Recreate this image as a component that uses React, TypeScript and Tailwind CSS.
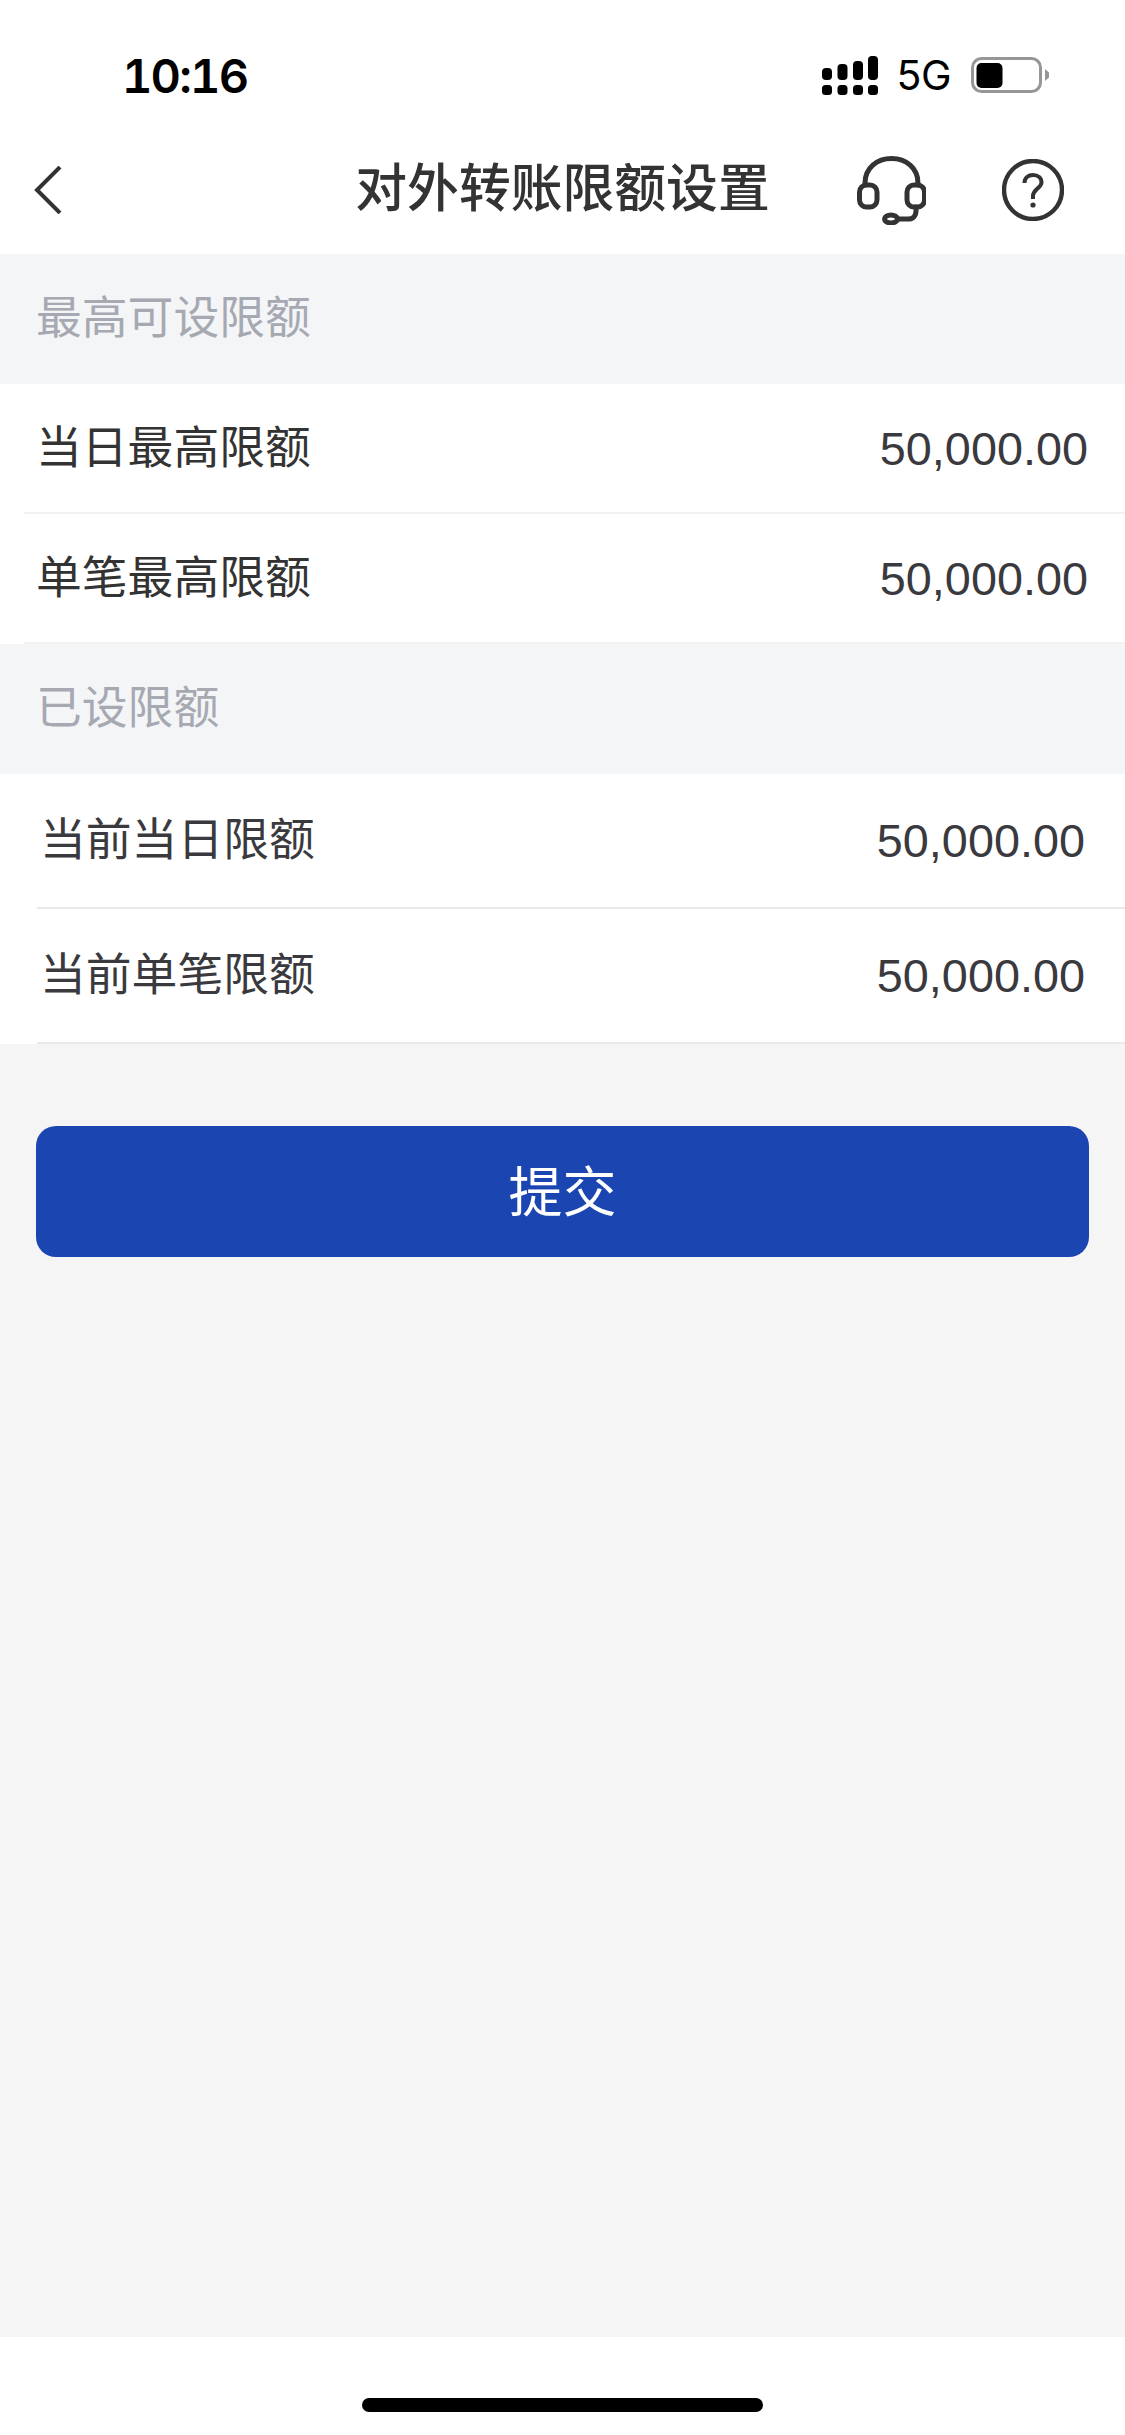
const FONT = "font-['Liberation_Sans','Noto_Sans_CJK_SC',sans-serif]"

function SignalIcon() {
    const cols = [
        { x: 0, top: 12 },
        { x: 15.5, top: 8 },
        { x: 31, top: 5 },
        { x: 46, top: 0 },
    ]
    return (
        <svg width="56" height="39" viewBox="0 0 56 39" fill="#000">
            {cols.map((c) => (
                <g key={c.x}>
                    <rect x={c.x} y={c.top} width="10" height={24 - c.top} rx="4" />
                    <rect x={c.x} y="29" width="10" height="10" rx="3.5" />
                </g>
            ))}
        </svg>
    )
}

function BatteryIcon() {
    return (
        <svg width="78" height="36" viewBox="0 0 78 36">
            <rect x="1.5" y="1.5" width="68" height="33" rx="9" fill="none" stroke="#969696" strokeWidth="3" />
            <rect x="5.5" y="6" width="26" height="25" rx="5" fill="#000" />
            <path d="M74 12 L78 15.5 V20.5 L74 24 Z" fill="#969696" />
        </svg>
    )
}

function HeadsetIcon() {
    return (
        <svg width="69" height="69" viewBox="0 0 69 69" fill="none" stroke="#333" strokeWidth="5" strokeLinecap="round">
            <path d="M8 29 V27 C8 12 20 2.5 34.5 2.5 C49 2.5 61 12 61 27 V29" />
            <rect x="2.5" y="29" width="17.5" height="22" rx="7" />
            <rect x="50" y="29" width="17.5" height="22" rx="7" />
            <path d="M59 51 V55 C59 60 56 63 51 63 H41" />
            <ellipse cx="34" cy="63" rx="6.5" ry="4" />
        </svg>
    )
}

function HelpIcon() {
    return (
        <svg width="62" height="62" viewBox="-31 -31 62 62" fill="none" stroke="#333" strokeWidth="4.4">
            <circle cx="0" cy="0" r="29" />
            <path d="M-8.5 -7 C-8.5 -12.5 -4.5 -15 0 -15 C5 -15 8.5 -12 8.5 -7.5 C8.5 -2 0 -1 0 6 V9" strokeWidth="4" />
            <circle cx="0" cy="15" r="2.6" fill="#333" stroke="none" />
        </svg>
    )
}

function SectionTitle({ text }: { text: string }) {
    return (
        <div className="h-[130px] flex items-center pl-[36px] bg-[#f4f5f7] text-[45.8px] text-[#a6a9b2]">
            {text}
        </div>
    )
}

function Row({ label, value, variant }: { label: string; value: string; variant: 'max' | 'current' }) {
    if (variant === 'max') {
        return (
            <div className="h-[130px] pl-[24px] bg-white">
                <div className="h-full flex items-center justify-between pl-[12px] pr-[37px] pt-[2px] border-b-2 border-[#f1f1f2]">
                    <span className="text-[45.8px] text-[#333]">{label}</span>
                    <span className="text-[46.8px] text-[#3a3a3e]">{value}</span>
                </div>
            </div>
        )
    }
    return (
        <div className="h-[135px] pl-[37px] bg-white">
            <div className="h-full flex items-center justify-between pl-[3px] pr-[40px] pt-[2px] border-b-2 border-[#e9e9ea]">
                <span className="text-[45.8px] text-[#3a3a3e]">{label}</span>
                <span className="text-[46.8px] text-[#3a3a3e]">{value}</span>
            </div>
        </div>
    )
}

export default function App() {
    return (
        <div className={`w-[1125px] h-[2435px] flex flex-col bg-[#f5f5f6] overflow-hidden ${FONT}`}>
            {/* status bar */}
            <div className="h-[128px] bg-white flex items-center justify-between pl-[122px] pr-[76px] pt-[22px] shrink-0">
                <span className="font-['Inter'] text-[47px] font-semibold tabular-nums tracking-[-1.8px] text-black leading-none">10:16</span>
                <div className="flex items-center">
                    <SignalIcon />
                    <span className="ml-[18px] mr-[20px] font-['Inter'] text-[41px] tracking-[-0.5px] text-black leading-none">5G</span>
                    <BatteryIcon />
                </div>
            </div>

            {/* nav */}
            <div className="h-[126px] bg-white flex items-center justify-between pb-[2px] shrink-0">
                <div className="w-[300px] pl-[34px]">
                    <svg width="28" height="48" viewBox="0 0 28 48" fill="none" stroke="#333" strokeWidth="4">
                        <path d="M26 1 L3 24 L26 47" />
                    </svg>
                </div>
                <span className="text-[51.8px] font-medium text-[#333] leading-none">对外转账限额设置</span>
                <div className="w-[300px] pr-[61px] flex items-center justify-end gap-[76px]">
                    <HeadsetIcon />
                    <HelpIcon />
                </div>
            </div>

            <SectionTitle text="最高可设限额" />
            <Row label="当日最高限额" value="50,000.00" variant="max" />
            <Row label="单笔最高限额" value="50,000.00" variant="max" />
            <SectionTitle text="已设限额" />
            <Row label="当前当日限额" value="50,000.00" variant="current" />
            <Row label="当前单笔限额" value="50,000.00" variant="current" />

            {/* submit */}
            <div className="flex-1 px-[36px] pt-[82px]">
                <button className="w-full h-[131px] pt-[3px] rounded-[20px] bg-[#1b46b2] text-white text-[54px]">提交</button>
            </div>

            {/* home indicator */}
            <div className="h-[98px] bg-white flex justify-center pt-[61px] shrink-0">
                <div className="w-[401px] h-[14px] rounded-full bg-black" />
            </div>
        </div>
    )
}
